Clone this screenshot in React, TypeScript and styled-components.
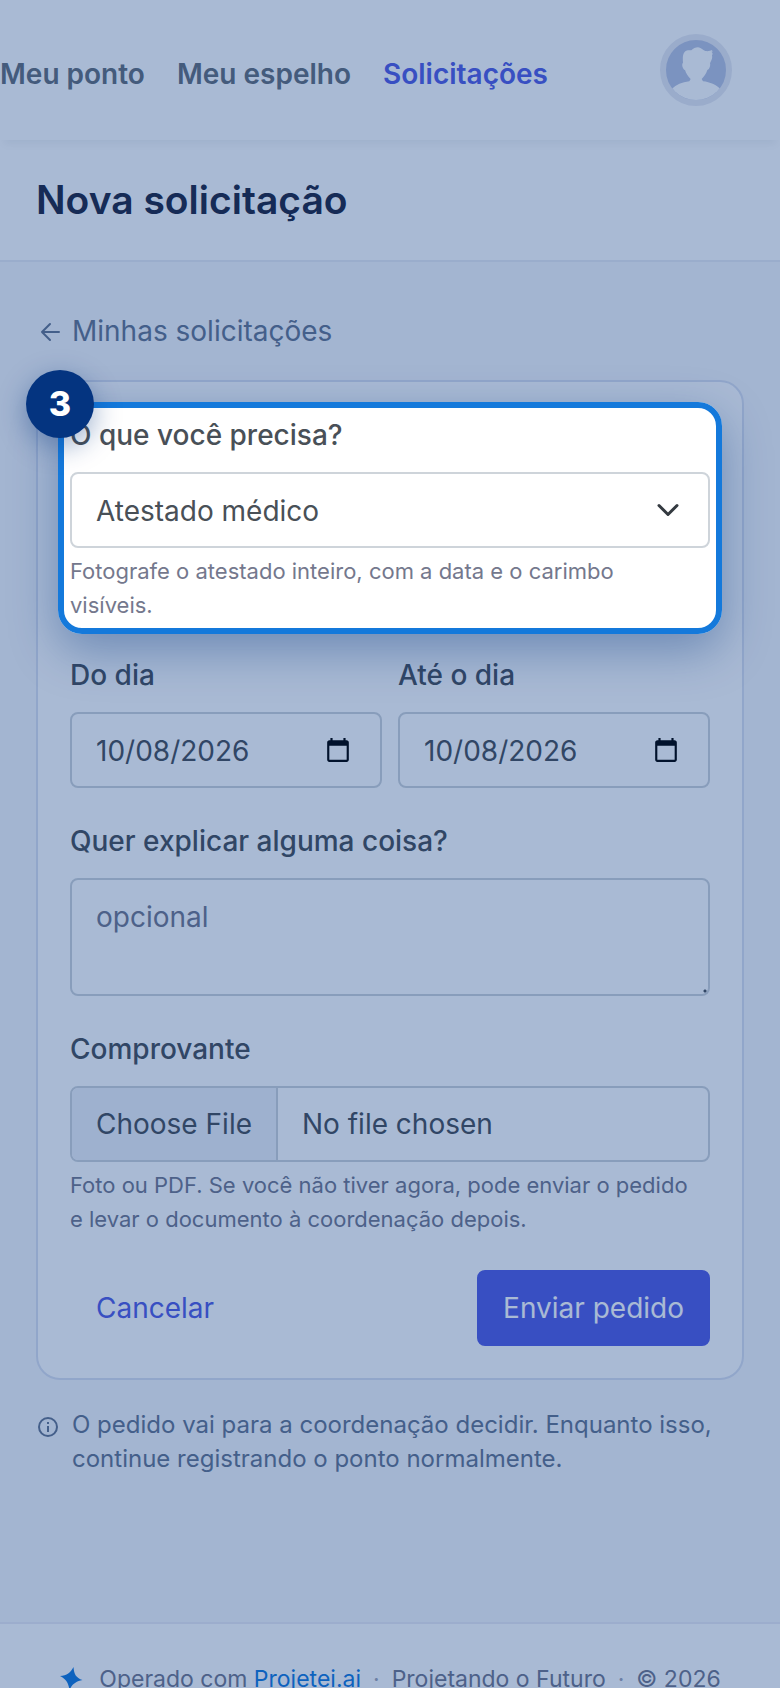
import React from "react";
import styled, { createGlobalStyle } from "styled-components";

const color = {
  text: "#495057",
  muted: "#74788d",
  heading: "#212640",
  nav: "#666f7a",
  back: "#66758f",
  primary: "#545de4",
  link: "#137ade",
  border: "#ced4da",
  cardBorder: "#dbe1f0",
  page: "#f6f7fa",
  navy: "#043480",
  highlight: "#1479db",
};

const GlobalStyle = createGlobalStyle`
  *, *::before, *::after { box-sizing: border-box; }
  body {
    margin: 0;
    background: ${color.page};
    color: ${color.text};
    font-family: Inter, "Liberation Sans", sans-serif;
    font-size: 28px;
    line-height: 42px;
  }
  input, select, textarea, button { font: inherit; color: inherit; }
`;

/* Scrolling is locked while the guided tour is open. */
const Page = styled.div`
  display: flex;
  flex-direction: column;
  height: 100vh;
  overflow: hidden;
`;

const Header = styled.header`
  position: relative;
  flex: none;
  display: flex;
  align-items: center;
  justify-content: space-between;
  padding: 34px 48px 34px 0;
  background: #fff;
  box-shadow: 0 8px 8px -4px rgba(15, 34, 58, 0.06);
`;

const Nav = styled.nav`
  display: flex;
  gap: 32px;
  padding-top: 8px;
`;

const NavLink = styled.a<{ $active?: boolean }>`
  color: ${(p) => (p.$active ? color.primary : color.nav)};
  font-weight: 600;
  text-decoration: none;
  white-space: nowrap;
`;

const AvatarButton = styled.button`
  display: flex;
  padding: 0;
  border: 6px solid #e9eaf2;
  border-radius: 50%;
  background: #bac4e1;
  overflow: hidden;
`;

const TitleBar = styled.div`
  flex: none;
  padding: 30px 36px;
  background: #fff;
  border-bottom: 2px solid #e9ebf3;
`;

const Title = styled.h1`
  margin: 0;
  color: ${color.heading};
  font-size: 39px;
  line-height: 60px;
  font-weight: 600;
`;

const Main = styled.main`
  flex: none;
  display: flex;
  flex-direction: column;
  padding: 48px 36px 146px;
`;

const BackLink = styled.a`
  display: flex;
  align-items: center;
  gap: 8px;
  margin-bottom: 28px;
  color: ${color.back};
  text-decoration: none;
`;

const Card = styled.form`
  padding: 32px;
  background: #fff;
  border: 2px solid ${color.cardBorder};
  border-radius: 24px;
`;

const Field = styled.div`
  position: relative;
  display: flex;
  flex-direction: column;
  min-width: 0;
  margin-bottom: 32px;
`;

const FieldRow = styled.div`
  display: grid;
  grid-template-columns: 1fr 1fr;
  gap: 16px;
`;

const Label = styled.label`
  margin-bottom: 16px;
  font-weight: 500;
`;

const Control = styled.input`
  width: 100%;
  height: 76px;
  padding: 16px 24px;
  border: 2px solid ${color.border};
  border-radius: 8px;
  background: #fff;
`;

const DateControl = styled(Control)`
  padding: 16px 26px 14px 24px;

  &::-webkit-datetime-edit,
  &::-webkit-datetime-edit-fields-wrapper,
  &::-webkit-datetime-edit-month-field,
  &::-webkit-datetime-edit-day-field,
  &::-webkit-datetime-edit-year-field {
    padding: 0;
    font-variant-numeric: normal;
  }
`;

const FileControl = styled(Control)`
  padding: 0;
  line-height: 72px;
  overflow: hidden;

  &::file-selector-button {
    height: 72px;
    margin: 0 24px 0 0;
    padding: 0 24px;
    border: 0 solid ${color.border};
    border-right-width: 2px;
    background: #eff1f8;
    color: inherit;
    font: inherit;
  }
`;

const TextArea = styled.textarea`
  height: 118px;
  padding: 16px 24px;
  border: 2px solid ${color.border};
  border-radius: 8px;
  background: #fff;
  line-height: 42px;

  &::placeholder { color: ${color.muted}; opacity: 1; }

  &::-webkit-resizer {
    background: radial-gradient(circle at 12px 12px, ${color.text} 1px, transparent 2px);
  }
`;

const SelectWrap = styled.div`
  position: relative;
`;

const Select = styled(Control).attrs({ as: "select" })`
  display: block;
  padding-right: 72px;
  appearance: none;
`;

const Chevron = styled.svg`
  position: absolute;
  top: 22px;
  right: 24px;
  pointer-events: none;
`;

const Hint = styled.small`
  margin-top: 6px;
  padding-right: 12px;
  color: ${color.muted};
  font-size: 22px;
  line-height: 34px;
`;

const Spotlight = styled.div`
  position: absolute;
  z-index: 10;
  inset: -12px;
  border: 6px solid ${color.highlight};
  border-radius: 24px;
  box-shadow:
    0 16px 48px rgba(4, 52, 128, 0.36),
    0 0 0 3000px rgba(4, 52, 128, 0.34);
  pointer-events: none;
`;

const StepBadge = styled.span`
  position: absolute;
  top: -38px;
  left: -38px;
  display: flex;
  align-items: center;
  justify-content: center;
  width: 68px;
  height: 68px;
  border-radius: 50%;
  background: ${color.navy};
  color: #fff;
  font-size: 34px;
  font-weight: 800;
  box-shadow: 0 8px 28px rgba(4, 52, 128, 0.4);
`;

const Actions = styled.div`
  display: flex;
  justify-content: space-between;
  padding-top: 2px;
`;

const Button = styled.button<{ $primary?: boolean }>`
  height: 76px;
  padding: 0 24px;
  border: 2px solid ${(p) => (p.$primary ? color.primary : "transparent")};
  border-radius: 8px;
  background: ${(p) => (p.$primary ? color.primary : "transparent")};
  color: ${(p) => (p.$primary ? "#fff" : color.primary)};
`;

const Note = styled.p`
  display: flex;
  gap: 12px;
  margin: 28px 0 0;
  color: ${color.back};
  font-size: 24px;
  line-height: 34px;
`;

const NoteIcon = styled.svg`
  flex: none;
  margin-top: 7px;
`;

const Footer = styled.footer`
  flex: none;
  display: flex;
  align-items: center;
  justify-content: center;
  gap: 12px;
  padding: 38px 36px;
  background: #fff;
  border-top: 2px solid #ebebf5;
  color: ${color.muted};
  font-size: 23px;
  line-height: 34px;
  white-space: nowrap;
`;

const Brand = styled.span`
  display: flex;
  align-items: center;
  gap: 16px;
`;

const FooterLink = styled.a`
  color: ${color.link};
  text-decoration: none;
`;

const Dot = styled.span`
  color: #a3a7b8;
`;

export default function App() {
  return (
    <>
      <GlobalStyle />
      <Page>
        <Header>
          <Nav>
            <NavLink href="#ponto">Meu ponto</NavLink>
            <NavLink href="#espelho">Meu espelho</NavLink>
            <NavLink href="#solicitacoes" $active>Solicitações</NavLink>
          </Nav>
          <AvatarButton type="button" aria-label="Perfil">
            <svg width="60" height="60" viewBox="0 0 180 180" fill="#fff" aria-hidden="true">
              <path d="M51 68C50 50 50 42 58 34C64 29 70 31 76 31C82 26 88 22 96 22C104 22 110 30 118 33C126 34 133 33 139 30L137 35L141 34L137 39L141 41L138 45C140 54 137 60 134 65L132 70C134 76 131 88 124 90C120 103 113 111 107 117L111 124C132 126 151 135 162 146L180 180H0L18 146C30 134 48 127 70 124L74 117C66 110 60 100 57 90C50 88 46 72 51 68Z" />
            </svg>
          </AvatarButton>
        </Header>

        <TitleBar>
          <Title>Nova solicitação</Title>
        </TitleBar>

        <Main>
          <BackLink href="#solicitacoes">
            <svg width="28" height="28" viewBox="0 0 28 28" fill="none" stroke="currentColor" strokeWidth="2" strokeLinecap="round" strokeLinejoin="round" aria-hidden="true">
              <path d="M23 15H6M14 7L6 15L14 23" />
            </svg>
            Minhas solicitações
          </BackLink>

          <Card>
            <Field>
              <Label htmlFor="tipo">O que você precisa?</Label>
              <SelectWrap>
                <Select id="tipo">
                  <option>Atestado médico</option>
                </Select>
                <Chevron width="32" height="32" viewBox="0 0 32 32" fill="none" stroke="#343a40" strokeWidth="3" strokeLinecap="round" strokeLinejoin="round" aria-hidden="true">
                  <path d="M5 11.500L14 20.500L23 11.500" />
                </Chevron>
              </SelectWrap>
              <Hint>Fotografe o atestado inteiro, com a data e o carimbo visíveis.</Hint>
              <Spotlight>
                <StepBadge>3</StepBadge>
              </Spotlight>
            </Field>

            <FieldRow>
              <Field>
                <Label htmlFor="inicio">Do dia</Label>
                <DateControl id="inicio" type="date" defaultValue="2026-10-08" />
              </Field>
              <Field>
                <Label htmlFor="fim">Até o dia</Label>
                <DateControl id="fim" type="date" defaultValue="2026-10-08" />
              </Field>
            </FieldRow>

            <Field>
              <Label htmlFor="motivo">Quer explicar alguma coisa?</Label>
              <TextArea id="motivo" placeholder="opcional" />
            </Field>

            <Field>
              <Label htmlFor="comprovante">Comprovante</Label>
              <FileControl id="comprovante" type="file" />
              <Hint>
                Foto ou PDF. Se você não tiver agora, pode enviar o pedido e levar o documento à
                coordenação depois.
              </Hint>
            </Field>

            <Actions>
              <Button type="button">Cancelar</Button>
              <Button type="submit" $primary>Enviar pedido</Button>
            </Actions>
          </Card>

          <Note>
            <NoteIcon width="24" height="24" viewBox="0 0 24 24" fill="none" stroke="currentColor" strokeWidth="2" aria-hidden="true">
              <circle cx="12" cy="12" r="9" />
              <path d="M12 11V17M12 7V9" />
            </NoteIcon>
            <span>
              O pedido vai para a coordenação decidir. Enquanto isso, continue registrando o ponto
              normalmente.
            </span>
          </Note>
        </Main>

        <Footer>
          <Brand>
            <svg width="24" height="24" viewBox="0 0 24 24" fill={color.link} aria-hidden="true">
              <path d="M14.500 0C15 7 17 11 23.500 13C17 14.500 13.500 16.500 10.500 23C9.500 16 7 12 1 9C8 8.500 11.500 6 14.500 0Z" />
            </svg>
            <span>
              Operado com <FooterLink href="#projetei">Projetei.ai</FooterLink>
            </span>
          </Brand>
          <Dot>·</Dot>
          <span>Projetando o Futuro</span>
          <Dot>·</Dot>
          <span>© 2026</span>
        </Footer>
      </Page>
    </>
  );
}
